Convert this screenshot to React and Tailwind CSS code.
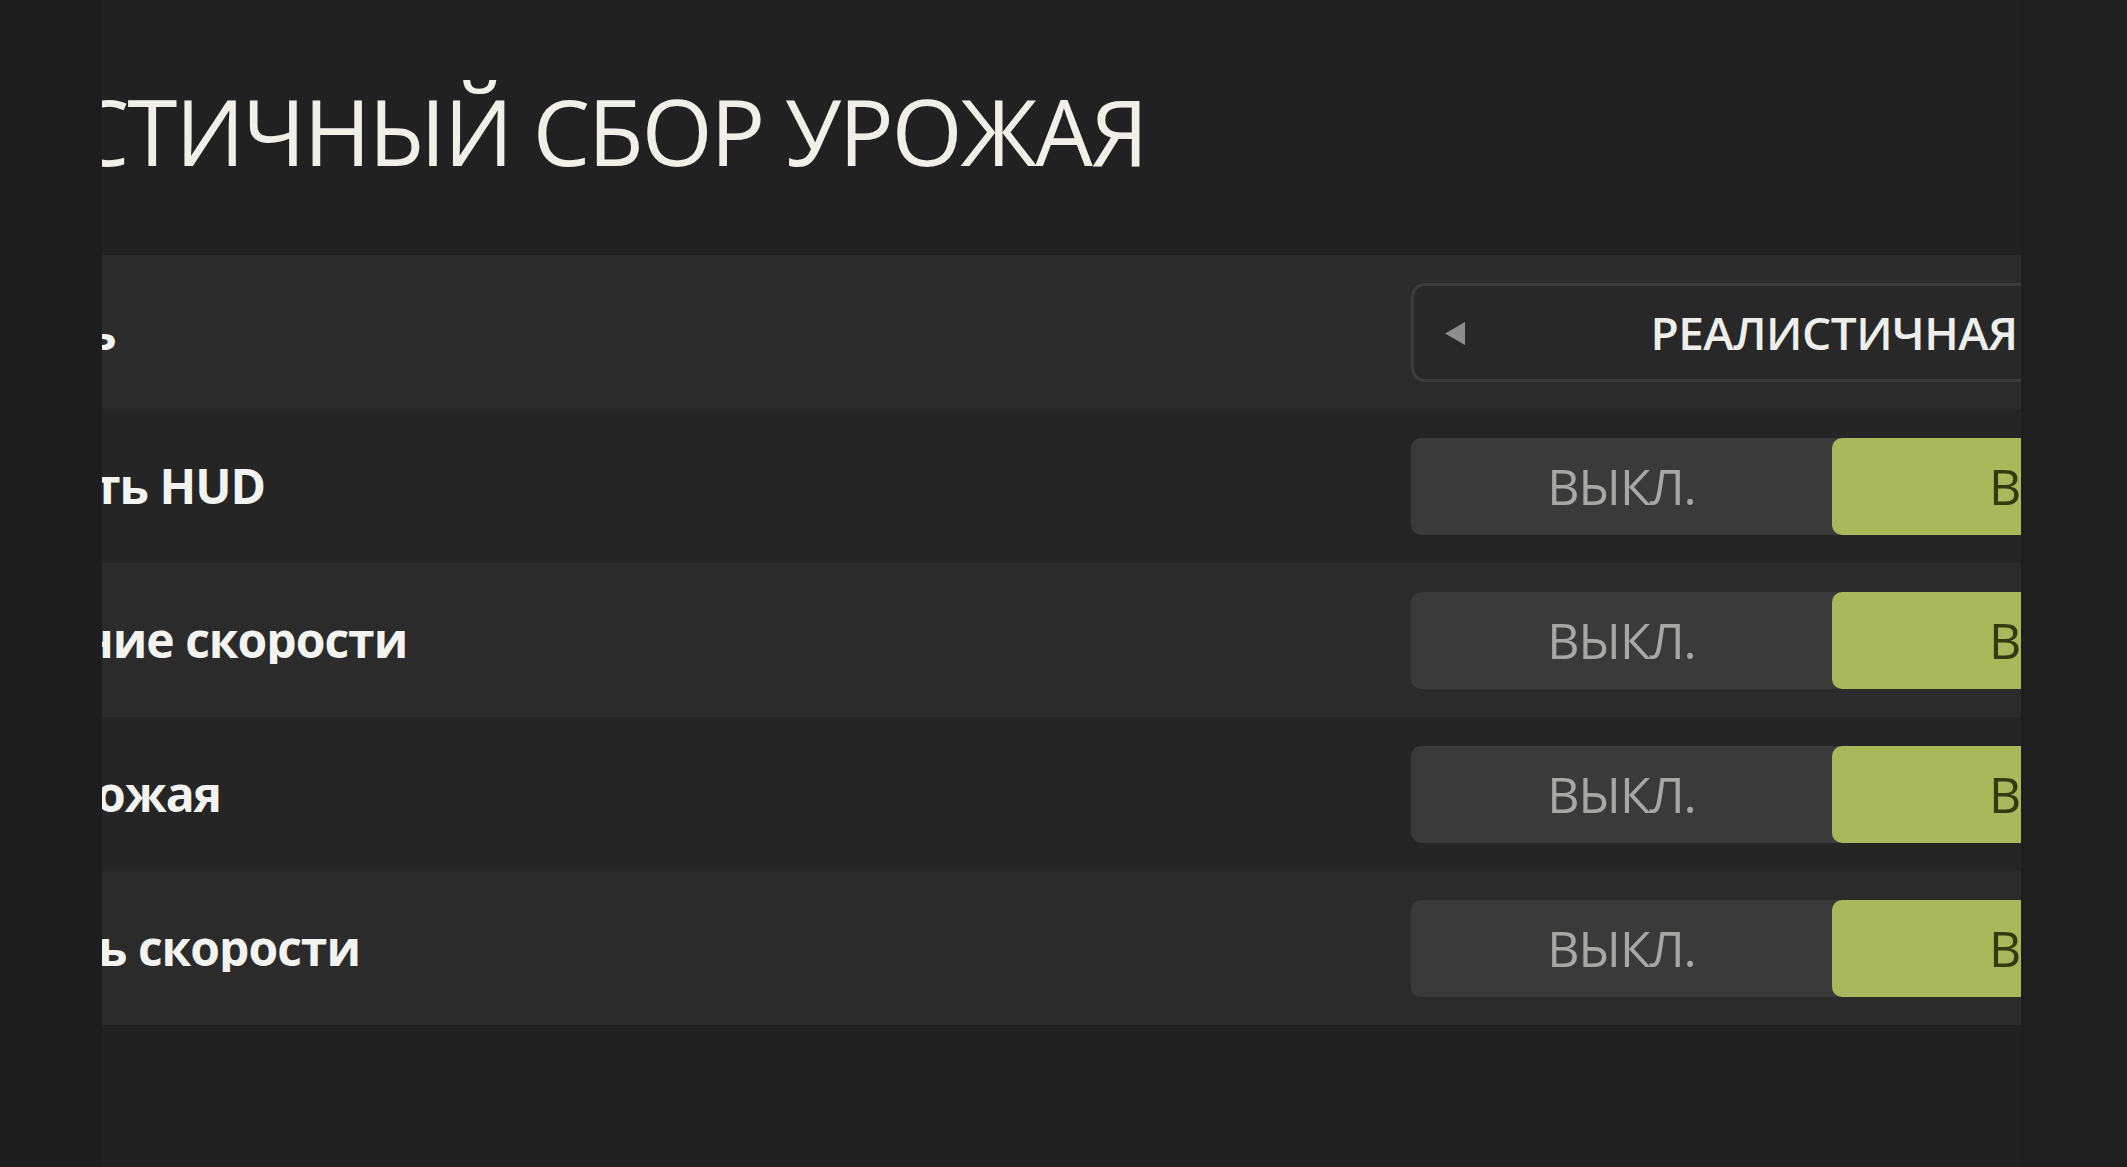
import React from "react";

const rows = [
  { label: "ь", shift: "-ml-[15px]", type: "select", value: "РЕАЛИСТИЧНАЯ" },
  { label: "ть HUD", shift: "-ml-[8px]", type: "toggle" },
  { label: "ние скорости", shift: "-ml-[20px]", type: "toggle" },
  { label: "ожая", shift: "-ml-[6px]", type: "toggle" },
  { label: "ь скорости", shift: "-ml-[4px]", type: "toggle" },
];

function Selector({ value }) {
  return (
    <div className="relative flex h-[99px] w-[846px] shrink-0 items-center justify-center rounded-[14px] border-[3px] border-[#3c3c3c] bg-[#282828]">
      <svg
        className="absolute left-[31px] top-[36px]"
        width="21"
        height="23"
        viewBox="0 0 21 23"
      >
        <polygon points="20,0 20,23 0,11.5" fill="#8d8d8d" />
      </svg>
      <span className="text-[46px] font-semibold leading-none tracking-[-0.5px] text-[#eeeeea]">
        {value}
      </span>
      <svg
        className="absolute right-[31px] top-[36px]"
        width="21"
        height="23"
        viewBox="0 0 21 23"
      >
        <polygon points="0,0 0,23 21,11.5" fill="#8d8d8d" />
      </svg>
    </div>
  );
}

function Toggle() {
  return (
    <div className="flex h-[97px] w-[842px] shrink-0 rounded-[10px] bg-[#3a3a3a]">
      <div className="flex w-[421px] items-center justify-center text-[50px] leading-none tracking-[-1px] text-[#a7a7a5]">
        ВЫКЛ.
      </div>
      <div className="flex w-[421px] items-center justify-center rounded-[10px] bg-[#a9b85a] text-[50px] leading-none tracking-[-1px] text-[#323a10]">
        ВКЛ.
      </div>
    </div>
  );
}

export default function App() {
  return (
    <div
      className="flex h-[1167px] w-[2127px] bg-[#212121]"
      style={{ fontFamily: '"Open Sans", "Noto Sans", sans-serif' }}
    >
      <div className="w-[102px] shrink-0 bg-[#1d1d1d]"></div>

      <div className="flex-1 overflow-hidden bg-[#212121]">
        <div className="h-[255px] pt-[86px]">
          <h1 className="-ml-[30px] whitespace-nowrap text-[91px] font-normal leading-none tracking-[-2px] text-[#f0f0e8]">
            СТИЧНЫЙ СБОР УРОЖАЯ
          </h1>
        </div>

        {rows.map((row, i) => (
          <div
            key={i}
            className={`flex h-[154px] items-center ${
              i % 2 === 0 ? "bg-[#2b2b2b]" : "bg-[#252525]"
            }`}
          >
            <div className="w-[1309px] shrink-0 overflow-hidden">
              <div
                className={`${row.shift} whitespace-nowrap text-[48px] font-bold leading-none tracking-[-1px] text-[#f3f3ef]`}
              >
                {row.label}
              </div>
            </div>
            {row.type === "select" ? <Selector value={row.value} /> : <Toggle />}
          </div>
        ))}
      </div>

      <div className="w-[106px] shrink-0 bg-[#1e1e1e]"></div>
    </div>
  );
}
